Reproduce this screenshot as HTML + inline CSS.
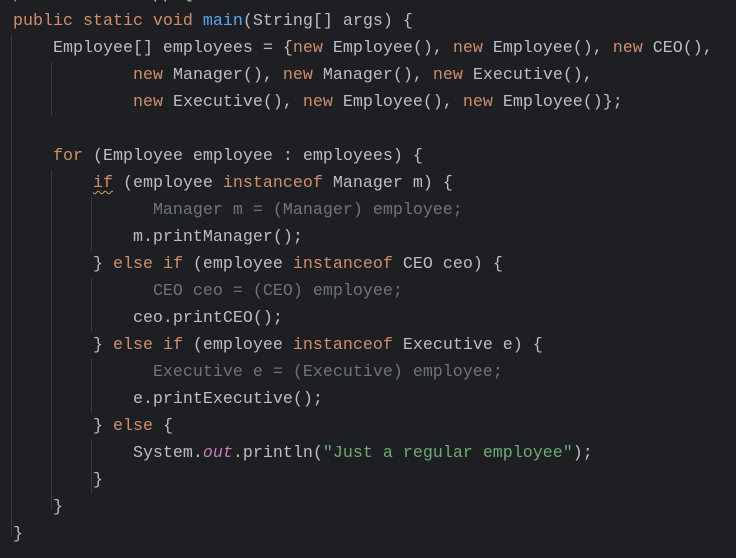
<!DOCTYPE html>
<html><head><meta charset="utf-8"><style>
html,body{margin:0;padding:0;background:#1e1f22;width:736px;height:558px;overflow:hidden}
.c{position:absolute;left:13px;top:-19px;font-family:"Liberation Mono",monospace;font-size:16.67px;line-height:27px;color:#bcbec4;white-space:pre}
.k{color:#cf8e6d}.f{color:#56a8f5}.s{color:#6aab73}.o{color:#c77dbb;font-style:italic}.g{color:#6f737a}
.w{text-decoration:underline wavy #c9a34a;text-decoration-thickness:1px;text-underline-offset:3px}
.v{position:absolute;width:1px;background:#393b40}
</style></head><body>
<div class="v" style="left:11px;top:35px;height:502px"></div>
<div class="v" style="left:51px;top:62px;height:54px"></div>
<div class="v" style="left:51px;top:170px;height:340px"></div>
<div class="v" style="left:91px;top:197px;height:54px"></div>
<div class="v" style="left:91px;top:278px;height:54px"></div>
<div class="v" style="left:91px;top:359px;height:54px"></div>
<div class="v" style="left:91px;top:440px;height:54px"></div>
<div class="c"><span class="k">public class</span> App {
<span class="k">public static void</span> <span class="f">main</span>(String[] args) {
    Employee[] employees = {<span class="k">new</span> Employee(), <span class="k">new</span> Employee(), <span class="k">new</span> CEO(),
            <span class="k">new</span> Manager(), <span class="k">new</span> Manager(), <span class="k">new</span> Executive(),
            <span class="k">new</span> Executive(), <span class="k">new</span> Employee(), <span class="k">new</span> Employee()};

    <span class="k">for</span> (Employee employee : employees) {
        <span class="k w">if</span> (employee <span class="k">instanceof</span> Manager m) {
              <span class="g">Manager m = (Manager) employee;</span>
            m.printManager();
        } <span class="k">else if</span> (employee <span class="k">instanceof</span> CEO ceo) {
              <span class="g">CEO ceo = (CEO) employee;</span>
            ceo.printCEO();
        } <span class="k">else if</span> (employee <span class="k">instanceof</span> Executive e) {
              <span class="g">Executive e = (Executive) employee;</span>
            e.printExecutive();
        } <span class="k">else</span> {
            System.<span class="o">out</span>.println(<span class="s">"Just a regular employee"</span>);
        }
    }
}</div>
</body></html>
